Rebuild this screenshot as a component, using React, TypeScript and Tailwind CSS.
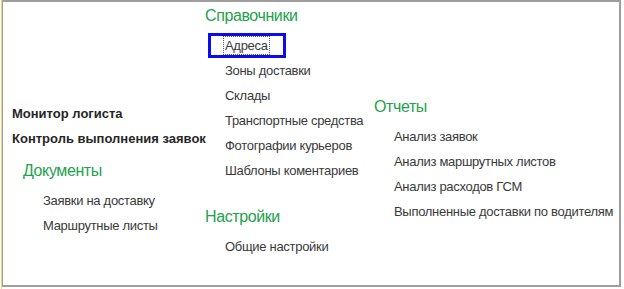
import React from "react";

const font = { fontFamily: '"Liberation Sans", Arial, sans-serif' };

function Heading({ children, className = "" }: { children: React.ReactNode; className?: string }) {
  return (
    <div className={`h-[25px] leading-[25px] text-[16px] tracking-[-0.4px] text-[#22a24c] whitespace-nowrap ${className}`}>
      {children}
    </div>
  );
}

function Item({ children, className = "" }: { children: React.ReactNode; className?: string }) {
  return (
    <div className={`h-[25px] leading-[25px] text-[13px] text-[#3a3a3a] whitespace-nowrap ${className}`}>
      {children}
    </div>
  );
}

export default function App() {
  return (
    <div className="flex w-[624px] h-[289px] bg-white overflow-hidden" style={font}>
      <div className="w-[1px] h-full bg-white shrink-0" />
      <div className="w-[1px] h-full bg-[#efd77f] shrink-0" />
      <div className="w-[619px] h-[287px] shrink-0 box-border border-t-2 border-l border-r-2 border-b-2 border-[#9e9e9e] flex overflow-hidden">
        {/* left column */}
        <div className="w-[202px] shrink-0 pl-[9px] pt-[99px] flex flex-col">
          <Item className="font-bold text-[#262626] tracking-[0px]">Монитор логиста</Item>
          <Item className="font-bold text-[#262626] tracking-[0px]">Контроль выполнения заявок</Item>
          <Heading className="mt-[7px] pl-[11px]">Документы</Heading>
          <div className="mt-[5px] pl-[31px] flex flex-col">
            <Item className="tracking-[-0.3px]">Заявки на доставку</Item>
            <Item className="tracking-[-0.3px]">Маршрутные листы</Item>
          </div>
        </div>
        {/* middle column */}
        <div className="w-[169px] shrink-0 pt-[1px] flex flex-col">
          <Heading>Справочники</Heading>
          <div className="mt-[5px] flex flex-col">
            <div className="ml-[3px] w-[78px] h-[25px] box-border border-[3px] border-[#0b0bf2] flex items-center pl-[12px]">
              <span className="border border-dotted border-[#555] px-[1px] leading-[17px] text-[13px] tracking-[-0.3px] text-[#3a3a3a] whitespace-nowrap">
                Адреса
              </span>
            </div>
            <div className="pl-[20px] flex flex-col">
              <Item className="tracking-[-0.3px]">Зоны доставки</Item>
              <Item className="tracking-[-0.3px]">Склады</Item>
              <Item className="tracking-[-0.3px]">Транспортные средства</Item>
              <Item className="tracking-[-0.3px]">Фотографии курьеров</Item>
              <Item className="tracking-[-0.3px]">Шаблоны коментариев</Item>
            </div>
          </div>
          <Heading className="mt-[21px]">Настройки</Heading>
          <div className="mt-[5px] pl-[20px] flex flex-col">
            <Item className="tracking-[-0.3px]">Общие настройки</Item>
          </div>
        </div>
        {/* right column */}
        <div className="flex-1 min-w-0 pt-[92px] flex flex-col">
          <Heading>Отчеты</Heading>
          <div className="mt-[5px] pl-[20px] flex flex-col">
            <Item className="tracking-[-0.3px]">Анализ заявок</Item>
            <Item className="tracking-[-0.3px]">Анализ маршрутных листов</Item>
            <Item className="tracking-[-0.3px]">Анализ расходов ГСМ</Item>
            <Item className="tracking-[-0.3px]">Выполненные доставки по водителям</Item>
          </div>
        </div>
      </div>
    </div>
  );
}
